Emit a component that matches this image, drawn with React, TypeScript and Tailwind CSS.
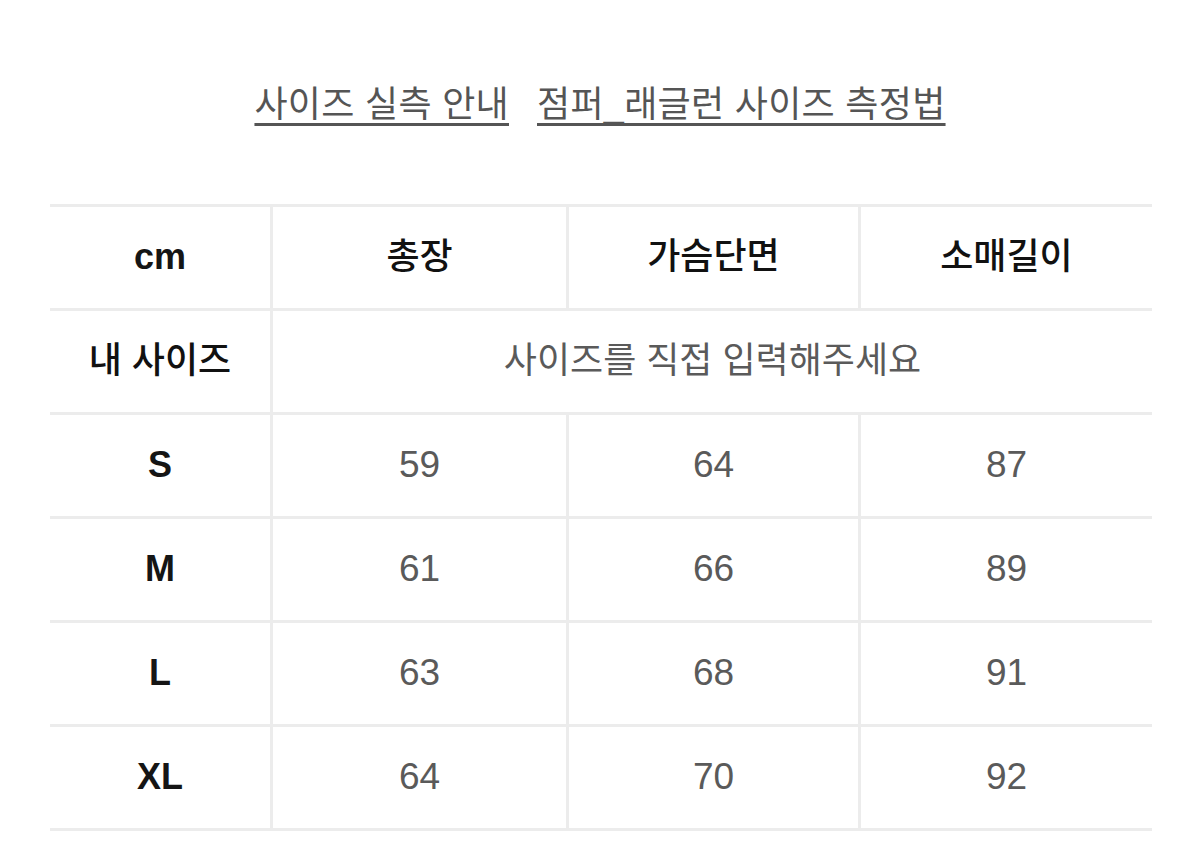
import React from "react"

const font = { fontFamily: '"Liberation Sans", "Noto Sans CJK KR", sans-serif' }

const sizes = [
  { name: "S", values: ["59", "64", "87"] },
  { name: "M", values: ["61", "66", "89"] },
  { name: "L", values: ["63", "68", "91"] },
  { name: "XL", values: ["64", "70", "92"] },
]

const cols = "grid grid-cols-[220px_296px_292px_294px]"
const cell = "flex items-center justify-center h-[101px] pb-[2px]"
const sep = "border-l-[3px] border-[#ececec]"
const head = "text-[36px] font-semibold text-[#151515]"
const headKo = "text-[36px] font-medium text-[#111]"
const value = "text-[37px] text-[#5a5a5a]"

export default function App() {
  return (
    <div className="w-[1200px] h-[852px] bg-white overflow-hidden" style={font}>
      <div className="flex justify-center gap-[28px] pt-[78px] text-[36px] text-[#555] tracking-[0.3px]">
        <span className="underline decoration-[3px] underline-offset-[6px] decoration-[#555]">사이즈 실측 안내</span>
        <span className="underline decoration-[3px] underline-offset-[6px] decoration-[#555]">점퍼_래글런 사이즈 측정법</span>
      </div>

      <div className="ml-[50px] mt-[72px] w-[1102px] border-t-[3px] border-[#ececec]">
        <div className={`${cols} border-b-[3px] border-[#ececec]`}>
          <div className={`${cell} ${head}`}>cm</div>
          <div className={`${cell} ${sep} ${headKo}`}>총장</div>
          <div className={`${cell} ${sep} ${headKo}`}>가슴단면</div>
          <div className={`${cell} ${sep} ${headKo}`}>소매길이</div>
        </div>
        <div className={`${cols} border-b-[3px] border-[#ececec]`}>
          <div className={`${cell} ${headKo}`}>내 사이즈</div>
          <div className={`${cell} ${sep} col-span-3 text-[36px] text-[#5a5a5a]`}>사이즈를 직접 입력해주세요</div>
        </div>
        {sizes.map((s) => (
          <div key={s.name} className={`${cols} border-b-[3px] border-[#ececec]`}>
            <div className={`${cell} ${head}`}>{s.name}</div>
            {s.values.map((v, i) => (
              <div key={i} className={`${cell} ${sep} ${value}`}>{v}</div>
            ))}
          </div>
        ))}
      </div>
    </div>
  )
}
